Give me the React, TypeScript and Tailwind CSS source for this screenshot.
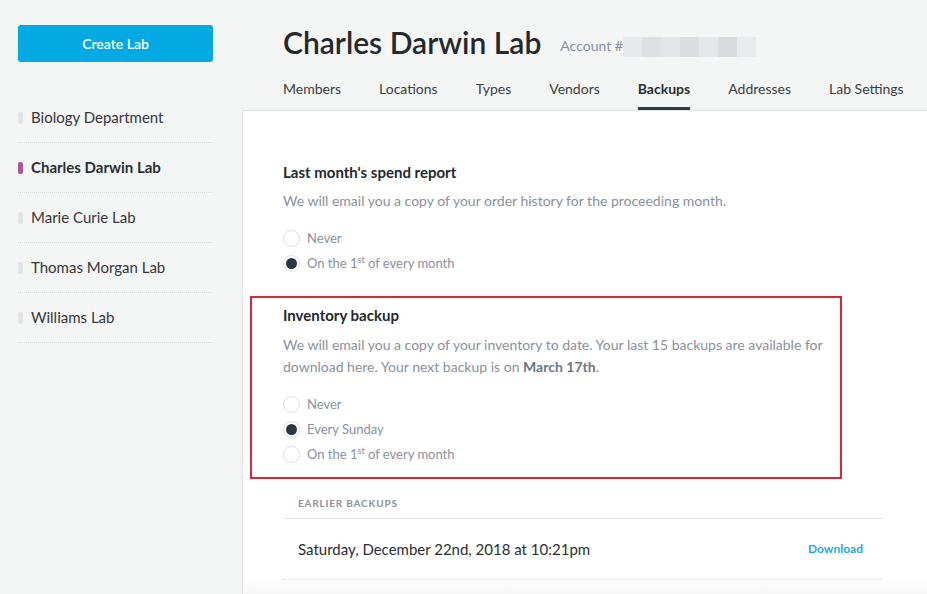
import React from "react";

const labs = [
  { name: "Biology Department", active: false },
  { name: "Charles Darwin Lab", active: true },
  { name: "Marie Curie Lab", active: false },
  { name: "Thomas Morgan Lab", active: false },
  { name: "Williams Lab", active: false },
];

const tabs = ["Members", "Locations", "Types", "Vendors", "Backups", "Addresses", "Lab Settings"];

function Radio({ checked, children }: { checked?: boolean; children: React.ReactNode }) {
  return (
    <div className="flex items-center h-[25px]">
      <span className="w-[17px] h-[17px] rounded-full border border-[#dcdee2] bg-white flex items-center justify-center">
        {checked && <span className="w-[11px] h-[11px] rounded-full bg-[#2c3543]" />}
      </span>
      <span className="ml-[7px] text-[13px] text-[#8a909c]">{children}</span>
    </div>
  );
}

function First() {
  return (
    <>
      On the 1<sup className="text-[9px] -top-[5px]">st</sup> of every month
    </>
  );
}

const blur = ["#e8e9eb", "#dfe0e3", "#e4e5e7", "#dcdde0", "#e6e7e9", "#dadbde", "#e9eaec"];

export default function App() {
  return (
    <div className="relative w-[927px] h-[594px] overflow-hidden bg-[#f4f5f5] flex" style={{ fontFamily: "Lato, 'Open Sans', sans-serif" }}>
      <aside className="w-[242px] shrink-0 pl-[18px] pr-[29px] pt-[25px]">
        <button className="w-full h-[37px] rounded-[3px] bg-[#03a9e2] text-white text-[14px] font-semibold">Create Lab</button>
        <ul className="mt-[31px]">
          {labs.map((l) => (
            <li key={l.name} className="h-[50px] flex items-center border-b border-dotted border-[#d9dbdd]">
              <span className={`w-[5px] h-[12px] rounded-[2px] ${l.active ? "bg-[#a9579c]" : "bg-[#e1e3e6]"}`} />
              <span className={`ml-[8px] text-[15px] ${l.active ? "font-bold text-[#2b2e33]" : "text-[#34373c]"}`}>{l.name}</span>
            </li>
          ))}
        </ul>
      </aside>
      <main className="flex-1 flex flex-col min-w-0">
        <header className="pl-[41px]">
          <div className="flex items-end pb-[6px] h-[66px]">
            <h1 className="text-[30px] leading-[36px] font-semibold text-[#25282d]">Charles Darwin Lab</h1>
            <span className="ml-[19px] mb-[4px] text-[14px] text-[#8a909c]">Account #</span>
            <span className="mb-[3px] flex">
              {blur.map((c, i) => (
                <span key={i} className="w-[19px] h-[20px]" style={{ backgroundColor: c }} />
              ))}
            </span>
          </div>
          <nav className="flex gap-[38px] h-[44px]">
            {tabs.map((t) => (
              <div key={t} className={`relative flex items-center text-[14px] ${t === "Backups" ? "font-bold text-[#2b2e33]" : "text-[#3a3d42]"}`}>
                {t}
                {t === "Backups" && <span className="absolute left-0 right-0 bottom-0 h-[3px] bg-[#2f3a46]" />}
              </div>
            ))}
          </nav>
        </header>
        <section className="flex-1 bg-white border-l border-t border-[#e3e4e5] pl-[40px] pt-[50px] shadow-[0_0_3px_rgba(0,0,0,0.05)]">
          <div className="w-[600px]">
            <h2 className="text-[15px] font-bold text-[#25282d] leading-[22px]">Last month's spend report</h2>
            <p className="mt-[7px] text-[14px] text-[#8a909c] leading-[22px]">
              We will email you a copy of your order history for the proceeding month.
            </p>
            <div className="mt-[14px]">
              <Radio>Never</Radio>
              <Radio checked>
                <First />
              </Radio>
            </div>
            <div className="mt-[20px] -ml-[33px] w-[592px] border-2 border-[#d42a36] pl-[31px] pt-[6px] pb-[10px]">
              <h2 className="text-[15px] font-bold text-[#25282d] leading-[22px]">Inventory backup</h2>
              <p className="mt-[8px] text-[14px] text-[#8a909c] leading-[22px]">
                We will email you a copy of your inventory to date. Your last 15 backups are available for download here. Your next backup is on{" "}
                <span className="font-bold text-[#6f7581]">March 17th</span>.
              </p>
              <div className="mt-[14px]">
                <Radio>Never</Radio>
                <Radio checked>Every Sunday</Radio>
                <Radio>
                  <First />
                </Radio>
              </div>
            </div>
            <div className="mt-[13px] h-[27px] pl-[15px] flex items-center text-[10px] font-bold tracking-[0.08em] text-[#8a909c] border-b border-[#e0e2e4] pb-[4px]">
              EARLIER BACKUPS
            </div>
            <div className="h-[61px] flex items-center justify-between pl-[15px] pr-[20px] border-b border-dotted border-[#d5d7da]">
              <span className="text-[15px] text-[#2b2e33]">Saturday, December 22nd, 2018 at 10:21pm</span>
              <span className="text-[12px] font-bold text-[#1ea7e1]">Download</span>
            </div>
          </div>
        </section>
      </main>
      <div className="absolute left-[243px] right-0 bottom-0 h-[16px] bg-gradient-to-b from-white/0 to-[#f6f6f6]" />
    </div>
  );
}
